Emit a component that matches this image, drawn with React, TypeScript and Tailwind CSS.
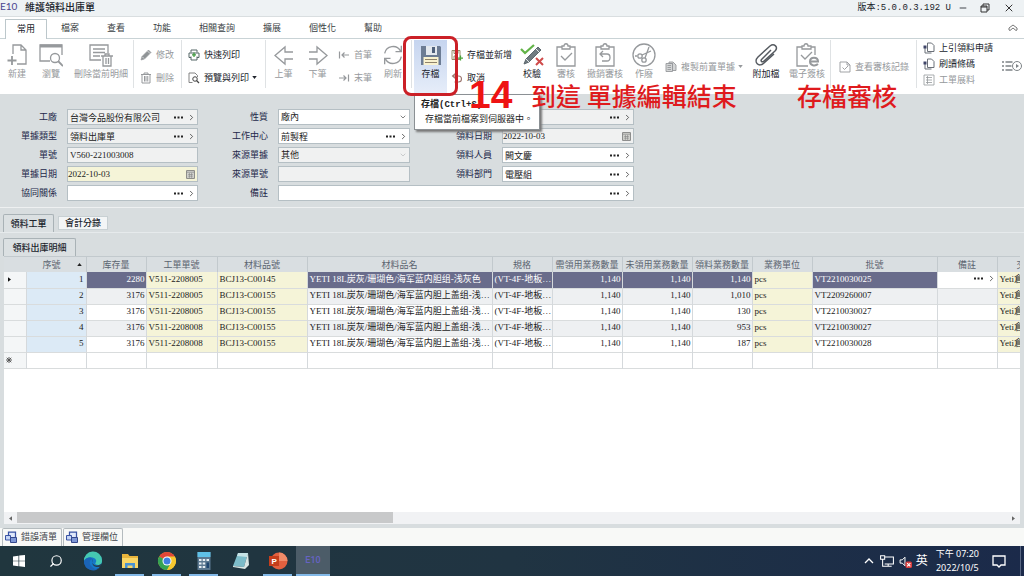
import { clsx } from "clsx";
import { ChevronDown, ChevronRight, Minus, Search, X } from "lucide-react";
import type { ReactNode } from "react";

const ui = "font-['Liberation_Sans','Noto_Sans_CJK_TC',sans-serif]";
const serif = "font-['Liberation_Serif','Noto_Sans_CJK_TC',serif]";

type IconProps = { children: ReactNode; className?: string; box?: string };

function Svg({ children, className = "h-6 w-6", box = "0 0 24 24" }: IconProps) {
  return (
    <svg viewBox={box} className={clsx("shrink-0", className)} fill="none" stroke="currentColor" strokeWidth="1.3" aria-hidden="true">
      {children}
    </svg>
  );
}

const NewIcon = () => (
  <Svg>
    <path d="M8 11V2h8l5 5v14h-9M16 2v5h5" />
    <path d="M7 13v9M2.500 17.500h9" strokeWidth="1.800" />
  </Svg>
);

const BrowseIcon = () => (
  <Svg>
    <path d="M11 18H1V2h22v10" />
    <path d="M1 3h22" strokeWidth="3" />
    <circle cx="16" cy="15" r="4.500" />
    <path d="m19 18 5 5" strokeWidth="1.800" />
  </Svg>
);

const DeleteRowIcon = () => (
  <Svg>
    <path d="M12 17H1V2h18v8M4 6h12M4 9.500h12M4 13h7" />
    <path d="M12 13h12M16 12.500V11h4v1.500M14 13.500V23h8v-9.500M17 15v6M19.500 15v6" />
  </Svg>
);

const PencilIcon = () => (
  <Svg className="h-3 w-3">
    <path d="m2 22 2-7L17 2l5 5L9 20z" fill="#8f9396" />
    <path d="m5 16 3 3M15 4l5 5" stroke="#fff" />
  </Svg>
);

const TrashIcon = () => (
  <Svg className="h-3 w-3">
    <path d="M2 5h20M8 4V2h8v2M4 5v17h16V5M9 8v11M12 8v11M15.500 8v11" strokeWidth="2" />
  </Svg>
);

const QuickPrintIcon = () => (
  <Svg className="h-3 w-3">
    <path d="M6 7V2h12v5M6 17H2V8h20v9h-4M6 15v7h12v-7" stroke="#566" strokeWidth="2" />
    <path d="M12 7v9M8 11.500h8" stroke="#3d9a3d" strokeWidth="2.500" />
  </Svg>
);

const PreviewIcon = () => (
  <Svg className="h-3 w-3">
    <path d="M9 21H2V2h12l5 5v3" stroke="#777" strokeWidth="1.800" />
    <circle cx="14" cy="14" r="4.500" stroke="#444" strokeWidth="2" />
    <path d="m17 17 5 5" stroke="#444" strokeWidth="2.500" />
  </Svg>
);

const ArrowIcon = ({ flip }: { flip?: boolean }) => (
  <Svg className={clsx("h-6 w-5", flip && "-scale-x-100")} box="0 0 20 24">
    <path d="M19 9h-8V4L1 12.500 11 21v-5h8" />
  </Svg>
);

const EdgeArrowIcon = ({ flip }: { flip?: boolean }) => (
  <Svg className={clsx("h-3 w-3", flip && "-scale-x-100")}>
    <path d="M3 5v14M22 12H8M13 7l-5 5 5 5" strokeWidth="2.400" />
  </Svg>
);

const RefreshIcon = () => (
  <Svg className="h-6 w-5">
    <path d="M2 10a10.300 10.300 0 0 1 19-3M22 14a10.300 10.300 0 0 1-19 3M22 1v7h-7M2 23v-7h7" strokeWidth="1.600" />
  </Svg>
);

const SaveIcon = () => (
  <Svg>
    <path d="M2 3h19l1 1v18H2z" fill="#6c7c94" stroke="none" />
    <path d="M7 3h11v9H7z" fill="#e4e9ef" stroke="none" />
    <path d="M13 4h3v6h-3z" fill="#50617c" stroke="none" />
    <path d="M4.500 14h15v8h-15z" fill="#f9f2cf" stroke="none" />
    <path d="M6 16.500h12M6 19.500h12" stroke="#8f836c" strokeWidth="1" />
  </Svg>
);

const SaveNewIcon = () => (
  <Svg className="h-3 w-3">
    <path d="M2 3h16v18H2zM6 3v6h8V3M6 21v-7h6" stroke="#8a8058" strokeWidth="1.800" />
    <path d="M19 13v10M14 18h10" stroke="#4ca43d" strokeWidth="2.500" />
  </Svg>
);

const CancelIcon = () => (
  <Svg className="h-3 w-3">
    <path d="M9 3 3 8l6 5M3 8h12a6 6 0 0 1 0 12H7" stroke="#9c7770" strokeWidth="2.200" />
  </Svg>
);

const VerifyIcon = () => (
  <Svg>
    <path d="m1 6 4 4 9-8" stroke="#62b347" strokeWidth="2.200" />
    <path d="m4 21 2-5L18 4l3 3L9 19z" fill="#6f7a80" stroke="#5d686e" strokeWidth="1" />
    <path d="m6 16 3 3M16 6l3 3" stroke="#e4e8e9" strokeWidth="1" />
    <path d="m16 15 7 7m0-7-7 7" stroke="#cf4a4a" strokeWidth="2" />
  </Svg>
);

const Clipboard = ({ children }: { children?: ReactNode }) => (
  <Svg>
    <path d="M8 4H3v19h18V4h-5M8 3h2c0-3 4-3 4 0h2v3H8z" />
    {children}
  </Svg>
);

const VoidIcon = () => (
  <Svg>
    <circle cx="12" cy="12" r="11" />
    <circle cx="8" cy="13" r="2.200" />
    <circle cx="12" cy="17" r="2.200" />
    <path d="m10 12 9-4M13 15l4-11M3 13h2" />
  </Svg>
);

const CopyIcon = () => (
  <Svg className="h-3 w-3">
    <path d="M2 5h13v16H2zM8 2h8l6 6v11h-7V5H8zM5 9h7M5 13h7M5 17h7" strokeWidth="1.800" fill="#d3d5d6" />
  </Svg>
);

const ClipIcon = () => (
  <Svg>
    <path d="M17 7 8 16c-2 2 0 4 2 2L21 8c4-4-1-8-5-5L4 14c-5 5 1 11 6 6L20 11" stroke="#555a60" strokeWidth="1.500" />
  </Svg>
);

const SignIcon = () => (
  <Svg>
    <path d="M7 4H2v19h11M16 4h4v8M7 3h2c0-3 4-3 4 0h3v3H7zM6 12l4 4 7-7" />
    <path d="M15 18.500h8c0-5-8-5-8 0 0 4 5 5 8 2.500" strokeWidth="2" />
  </Svg>
);

const LogIcon = () => (
  <Svg className="h-3 w-3">
    <path d="M2 2h14l6 6v14H2zM16 2v6h6M7 13l4 4 7-7" strokeWidth="1.800" />
  </Svg>
);

const PageLinkIcon = () => (
  <Svg className="h-3 w-3">
    <path d="M9 2h8l5 5v12H9zM4 12v10h13" stroke="#6b7078" strokeWidth="2" />
    <path d="M1 7h6v6H1z" fill="#3f4568" stroke="none" />
  </Svg>
);

const GridIcon = () => (
  <Svg className="h-3 w-3">
    <path d="M2 2h20v20H2zM6 7h12M6 12h12M6 17h12M9 4v16" strokeWidth="1.600" />
  </Svg>
);

const CalendarIcon = () => (
  <Svg className="mr-0.5 h-[9px] w-[9px]" box="0 0 16 16">
    <path d="M1 1h14v14H1z" fill="#d5d6d2" stroke="#777" strokeWidth="1.500" />
    <path d="M1 4h14M4 8h8M4 11h8M6 5v9M10 5v9" stroke="#888" strokeWidth="1.200" />
  </Svg>
);

const DotsIcon = () => (
  <svg viewBox="0 0 9 3" className="h-[3px] w-[9px]" aria-hidden="true">
    <path d="M0 .5h2v2H0zM3.500 .5h2v2h-2zM7 .5h2v2H7z" fill="#222" />
  </svg>
);

const WindowsStackIcon = () => (
  <Svg className="h-3 w-3">
    <path d="M7 2h14v11H7z" fill="#dfe8fa" stroke="#3953a4" strokeWidth="2.500" />
    <path d="M1 9h10v9H1z" fill="#c5d5f4" stroke="#3953a4" strokeWidth="2" />
    <path d="M11 13h12v10H11z" fill="#7e97d6" stroke="#34488d" strokeWidth="2" />
  </Svg>
);

type ToolProps = { label: string; icon: ReactNode; width: string; off?: boolean; active?: boolean };

function BigTool({ label, icon, width, off, active }: ToolProps) {
  return (
    <button
      type="button"
      className={clsx(
        "flex h-[53px] shrink-0 flex-col items-center gap-px pt-[3px] leading-3 whitespace-nowrap",
        width,
        off ? "text-[#96999c]" : "text-[#20242c]",
        active && "bg-linear-to-b from-[#c6d5ef] to-[#e6edf9]"
      )}
    >
      {icon}
      <span>{label}</span>
    </button>
  );
}

function SmallTool({ label, icon, off, menu, dense }: { label: string; icon: ReactNode; off?: boolean; menu?: boolean; dense?: boolean }) {
  return (
    <button
      type="button"
      className={clsx("flex items-center gap-1 whitespace-nowrap", dense ? "h-4" : "h-[23px]", off ? "text-[#96999c]" : "text-[#20242c]")}
    >
      {icon}
      <span>{label}</span>
      {menu ? (
        <svg viewBox="0 0 6 4" className="-ml-px h-[3px] w-[5px]" aria-hidden="true">
          <path d="M0 0h6L3 4z" fill="currentColor" />
        </svg>
      ) : null}
    </button>
  );
}

const Divider = () => <div className="h-12 w-px shrink-0 bg-[#dfe2e4]" />;

const note = "pointer-events-none absolute top-[39px] z-30 font-['Noto_Sans_CJK_TC',sans-serif] text-[25px] leading-[34px] font-medium whitespace-nowrap text-[#df1a1d]";

function Ribbon() {
  return (
    <div className="relative flex h-[55px] shrink-0 items-start overflow-visible bg-white pt-px text-[9px]">
      <BigTool label="新建" icon={<NewIcon />} width="ml-px w-8" off />
      <BigTool label="瀏覽" icon={<BrowseIcon />} width="w-9" off />
      <BigTool label="刪除當前明細" icon={<DeleteRowIcon />} width="w-16" off />
      <Divider />
      <div className="w-[47px] shrink-0 pt-[3px] pl-1.5">
        <SmallTool label="修改" icon={<PencilIcon />} off />
        <SmallTool label="刪除" icon={<TrashIcon />} off />
      </div>
      <Divider />
      <div className="w-[83px] shrink-0 pt-[3px] pl-1.5">
        <SmallTool label="快速列印" icon={<QuickPrintIcon />} />
        <SmallTool label="預覽與列印" icon={<PreviewIcon />} menu />
      </div>
      <Divider />
      <BigTool label="上筆" icon={<ArrowIcon />} width="w-[35px]" off />
      <BigTool label="下筆" icon={<ArrowIcon flip />} width="w-[33px]" off />
      <div className="w-[41px] shrink-0 pt-[3px] pl-1">
        <SmallTool label="首筆" icon={<EdgeArrowIcon />} off />
        <SmallTool label="末筆" icon={<EdgeArrowIcon flip />} off />
      </div>
      <BigTool label="刷新" icon={<RefreshIcon />} width="w-9" off />
      <Divider />
      <div className="relative ml-0.5 shrink-0">
        <BigTool label="存檔" icon={<SaveIcon />} width="w-[33px]" active />
        <div className="pointer-events-none absolute -inset-x-[11px] -top-1 -bottom-[3px] z-20 rounded-lg border-3 border-[#cb2027]" />
        <Tooltip />
      </div>
      <div className="w-[68px] shrink-0 pt-[3px] pl-1">
        <SmallTool label="存檔並新增" icon={<SaveNewIcon />} />
        <SmallTool label="取消" icon={<CancelIcon />} />
      </div>
      <BigTool label="校驗" icon={<VerifyIcon />} width="w-[34px]" />
      <BigTool label="審核" icon={<Clipboard><path d="m7 13 4 4 7-7" /></Clipboard>} width="w-[34px]" off />
      <BigTool label="撤銷審核" icon={<Clipboard><path d="m10 8-3 3 3 3M7 11h7c4 0 4 7 0 7H9" /></Clipboard>} width="w-11" off />
      <BigTool label="作廢" icon={<VoidIcon />} width="w-[34px]" off />
      <div className="w-[87px] shrink-0 pt-[15px] pl-1">
        <SmallTool label="複製前置單據" icon={<CopyIcon />} off menu />
      </div>
      <BigTool label="附加檔" icon={<ClipIcon />} width="w-9" />
      <BigTool label="電子簽核" icon={<SignIcon />} width="w-[46px]" off />
      <Divider />
      <div className="w-[85px] shrink-0 pt-[15px] pl-2">
        <SmallTool label="查看審核記錄" icon={<LogIcon />} off />
      </div>
      <Divider />
      <div className="shrink-0 pl-1.5">
        <SmallTool label="上引領料申請" icon={<PageLinkIcon />} dense />
        <SmallTool label="刷讀條碼" icon={<PageLinkIcon />} dense />
        <SmallTool label="工單展料" icon={<GridIcon />} dense off />
      </div>
      <button type="button" aria-label="更多" className="mt-5 mr-0.5 ml-auto text-[#7d8286]">
        <Svg className="h-3 w-5" box="0 0 20 12">
          <path d="M0 2h2M0 6h2M0 10h2M3.500 2h7M3.500 6h6M3.500 10h7" />
          <circle cx="15" cy="6" r="4.500" strokeWidth="1" />
          <path d="m14 4 3 2-3 2z" fill="currentColor" stroke="none" />
        </Svg>
      </button>

      <p className={clsx(note, "left-[531px]")}>到這 單據編輯結束</p>
      <p className={clsx(note, "left-[797px]")}>存檔審核</p>
      <p className="pointer-events-none absolute top-9 left-[469px] z-30 text-[39px] leading-10 font-bold text-[#ee1313]">14</p>
    </div>
  );
}

function Tooltip() {
  return (
    <div role="tooltip" className="absolute top-[54px] left-0 z-10 h-9 w-[126px] border border-[#8b9094] bg-white pt-1 pl-1.5 leading-3 whitespace-nowrap text-[#222] shadow-[2px_2px_2px_#777]">
      <p className="font-['Liberation_Mono','Noto_Sans_CJK_TC',monospace] font-bold">存檔(Ctrl+S)</p>
      <p className="mt-0.5 pl-1">存檔當前檔案到伺服器中。</p>
    </div>
  );
}

type FieldProps = {
  id: string;
  label: string;
  value?: string;
  kind?: "lookup" | "plain" | "date" | "select";
  tone?: "white" | "grey" | "yellow";
  wide?: boolean;
  hideLabel?: boolean;
};

const tones = { white: "bg-white", grey: "bg-[#f0f1f1]", yellow: "bg-[#f5f4d8]" };

function Field({ id, label, value = "", kind = "lookup", tone = "white", wide, hideLabel }: FieldProps) {
  return (
    <>
      <label htmlFor={id} className={clsx("text-right leading-4 whitespace-nowrap text-[#23284a]", hideLabel && "opacity-0")}>
        {label}
      </label>
      <div className={clsx("flex h-4 min-w-0 items-center border border-[#b5bfc4]", tones[tone], wide && "col-span-3")}>
        {kind === "select" ? (
          <select id={id} defaultValue={value} className={clsx("h-full min-w-0 flex-1 appearance-none pl-0.5 leading-3 text-[#222]", serif)}>
            <option>{value}</option>
          </select>
        ) : (
          <input id={id} defaultValue={value} className={clsx("h-full min-w-0 flex-1 leading-3 text-[#222] outline-none", kind === "date" ? "pl-0" : "pl-0.5", serif)} />
        )}
        {kind === "lookup" ? <LookupButtons /> : null}
        {kind === "date" ? <CalendarIcon /> : null}
        {kind === "select" ? <ChevronDown className={clsx("mr-0.5 h-2 w-2", tone === "grey" ? "text-[#b5b8ba]" : "text-[#444]")} /> : null}
      </div>
    </>
  );
}

function LookupButtons() {
  return (
    <span className="flex shrink-0 items-center gap-1 pr-px">
      <button type="button" aria-label="開窗">
        <DotsIcon />
      </button>
      <button type="button" aria-label="前往">
        <ChevronRight className="h-[9px] w-[9px] text-[#333]" />
      </button>
    </span>
  );
}

function HeaderForm() {
  return (
    <form className="grid shrink-0 grid-cols-[57px_131px_60px_132px_72px_132px] gap-x-2.5 gap-y-[3px] border-b border-[#eef0f1] pt-[15px] pb-1.5 text-[9px]">
      <Field id="plant" label="工廠" value="台灣今品股份有限公司" tone="grey" />
      <Field id="nature" label="性質" value="廠內" kind="select" />
      <Field id="issue-unit" label="領料單位" tone="grey" hideLabel />
      <Field id="doc-type" label="單據類型" value="領料出庫單" tone="grey" />
      <Field id="center" label="工作中心" value="前製程" />
      <Field id="issue-date" label="領料日期" value="2022-10-03" kind="date" tone="grey" />
      <Field id="doc-no" label="單號" value="V560-221003008" kind="plain" tone="grey" />
      <Field id="source" label="來源單據" value="其他" kind="select" tone="grey" />
      <Field id="person" label="領料人員" value="闕文慶" />
      <Field id="doc-date" label="單據日期" value="2022-10-03" kind="date" tone="yellow" />
      <Field id="source-no" label="來源單號" kind="plain" tone="grey" />
      <Field id="dept" label="領料部門" value="電壓組" />
      <Field id="relation" label="協同關係" />
      <Field id="remark" label="備註" wide />
    </form>
  );
}

type Column = { title: string; width: string; yellow?: boolean; right?: boolean };

const columns: Column[] = [
  { title: "库存量", width: "w-[60px]", right: true },
  { title: "工單單號", width: "w-[71px]", yellow: true },
  { title: "材料品號", width: "w-[90px]", yellow: true },
  { title: "材料品名", width: "w-[185px]" },
  { title: "規格", width: "w-[60px]" },
  { title: "需領用業務數量", width: "w-[70px]", right: true },
  { title: "未領用業務數量", width: "w-[70px]", right: true },
  { title: "領料業務數量", width: "w-[60px]", right: true },
  { title: "業務單位", width: "w-[60px]", yellow: true },
  { title: "批號", width: "w-[125px]" },
  { title: "備註", width: "w-[60px]" },
  { title: "交", width: "w-[48px]", yellow: true }
];

const cover = "YETI 18L炭灰/珊瑚色/海军蓝内胆上盖组-浅…";
const spec = "(VT-4F-地板…";

const rows = [
  ["2280", "V511-2208005", "BCJ13-C00145", "YETI 18L炭灰/珊瑚色/海军蓝内胆组-浅灰色", spec, "1,140", "1,140", "1,140", "pcs", "VT2210030025", "", "Yeti倉"],
  ["3176", "V511-2208005", "BCJ13-C00155", cover, spec, "1,140", "1,140", "1,010", "pcs", "VT2209260007", "", "Yeti倉"],
  ["3176", "V511-2208005", "BCJ13-C00155", cover, spec, "1,140", "1,140", "130", "pcs", "VT2210030027", "", "Yeti倉"],
  ["3176", "V511-2208008", "BCJ13-C00155", cover, spec, "1,140", "1,140", "953", "pcs", "VT2210030027", "", "Yeti倉"],
  ["3176", "V511-2208008", "BCJ13-C00155", cover, spec, "1,140", "1,140", "187", "pcs", "VT2210030028", "", "Yeti倉"]
];

function DetailTable() {
  return (
    <table className={clsx("w-[1041px] table-fixed border-collapse text-[9px] leading-3 text-[#222]", serif)}>
      <thead>
        <tr className={clsx("h-[15px] bg-[#d9dee1] text-[#5b6470]", ui)}>
          <th className="w-[22px] p-0" aria-label="選取" />
          <th className="w-[60px] border-r border-[#c2c9cd] p-0 font-normal">
            <span className="flex items-center justify-end gap-4 pr-1">
              序號
              <svg viewBox="0 0 6 4" className="h-[3px] w-[5px]" aria-hidden="true">
                <path d="M0 4h6L3 0z" fill="#222" />
              </svg>
            </span>
          </th>
          {columns.map((col) => (
            <th key={col.title} className={clsx("overflow-hidden border-r border-[#c2c9cd] p-0 font-normal whitespace-nowrap", col.width)}>
              {col.title}
            </th>
          ))}
        </tr>
      </thead>
      <tbody>
        {rows.map((row, r) => (
          <tr key={r} className={clsx("h-4 border-b border-[#d9dcdd]", r % 2 ? "bg-[#eef0f2]" : "bg-white")}>
            <td className="border-r border-[#d5d9dc] bg-[#f4f6f7] p-0">
              {r === 0 ? (
                <svg viewBox="0 0 4 6" className="ml-1 h-[5px] w-[3px]" aria-hidden="true">
                  <path d="M0 0v6l4-3z" fill="#111" />
                </svg>
              ) : null}
            </td>
            <td className="border-r border-[#d5d9dc] bg-[#dceaf6] p-0 pr-0.5 pb-0.5 text-right">{r + 1}</td>
            {row.map((cell, c) => {
              const col = columns[c];
              const selected = r === 0 && !col.yellow && c !== 10;
              return (
                <td
                  key={c}
                  className={clsx(
                    "overflow-hidden border-r border-[#d5d9dc] p-0 pb-0.5 whitespace-nowrap",
                    col.right ? "pr-px text-right" : "pl-0.5",
                    col.yellow && "bg-[#f5f4d8]",
                    selected && "bg-[#696c8b] text-white"
                  )}
                >
                  {r === 0 && c === 10 ? (
                    <span className="flex justify-end">
                      <LookupButtons />
                    </span>
                  ) : (
                    cell
                  )}
                </td>
              );
            })}
          </tr>
        ))}
        <tr className="h-4 border-b border-[#d9dcdd]">
          <td className="border-r border-[#d5d9dc] bg-[#f4f6f7] p-0 pl-0.5">
            <Svg className="h-1.5 w-1.5" box="0 0 8 8">
              <path d="M4 0v8M0 4h8M1 1l6 6M7 1 1 7" stroke="#555" />
            </Svg>
          </td>
          {Array.from({ length: 13 }, (_, i) => (
            <td key={i} className="border-r border-[#d5d9dc] p-0" />
          ))}
        </tr>
      </tbody>
    </table>
  );
}

const menus = ["檔案", "查看", "功能", "相關查詢", "擴展", "個性化", "幫助"];

function TaskIcon({ children }: { children: ReactNode }) {
  return (
    <svg viewBox="0 0 20 20" className="h-5 w-5" aria-hidden="true">
      {children}
    </svg>
  );
}

const taskApps: { name: string; open?: boolean; icon: ReactNode }[] = [
  {
    name: "開始",
    icon: <TaskIcon><path d="M4 5.500 9.500 4.700v5H4zM10.200 4.600 16 4v5.700h-5.800zM4 10.300h5.500v5L4 14.600zM10.200 10.300H16V16l-5.800-.7z" fill="#fff" /></TaskIcon>
  },
  { name: "搜尋", icon: <Search className="h-[14px] w-[14px] -scale-x-100 text-white" strokeWidth={2} /> },
  {
    name: "Edge",
    icon: (
      <TaskIcon>
        <circle cx="10" cy="10" r="9" fill="#1677c9" />
        <path d="M1 10a9 9 0 0 1 18-1c.6 4-3 6-6 4.500-2-1 1-2 0-4.500C11.500 5.500 4 5 1 10z" fill="#45c8b1" />
        <path d="M1 10c2-4 7-4.500 8.500-2-4 1-4 7 2 9.500 2 .6 4 0 5.500-1.500A9 9 0 0 1 1 10z" fill="#1b64b7" />
        <path d="M10 8c-2 2-1 6 3.500 6.500 2 .2 4-1 5-2l-1 3C13 17.500 7 14.500 10 8z" fill="#263c4c" />
      </TaskIcon>
    )
  },
  {
    name: "檔案總管",
    open: true,
    icon: (
      <TaskIcon>
        <path d="M2 3h6l1.500 2H18v12H2z" fill="#e9b53c" />
        <path d="M2 7h16v10H2z" fill="#fad766" />
        <path d="M5 17v-5h10v5h-2.500v-2.500h-5V17z" fill="#4b94d3" />
      </TaskIcon>
    )
  },
  {
    name: "Chrome",
    open: true,
    icon: (
      <TaskIcon>
        <circle cx="10" cy="10" r="9" fill="#f6c72f" />
        <path d="M10 10 2.200 5.500A9 9 0 0 1 17.800 5.500z" fill="#e04638" />
        <path d="M10 10 2.200 5.500A9 9 0 0 0 10 19l4-7z" fill="#35a353" />
        <path d="M10 5.500h7.800A9 9 0 0 1 10 19l4-7z" fill="#f6c72f" />
        <circle cx="10" cy="10" r="4.500" fill="#fff" />
        <circle cx="10" cy="10" r="3.500" fill="#3f7fe0" />
      </TaskIcon>
    )
  },
  {
    name: "小算盤",
    open: true,
    icon: (
      <TaskIcon>
        <path d="M3.500 1h13v18h-13z" fill="#5b7890" />
        <path d="M3.500 1h13v5h-13z" fill="#5fc0e6" />
        <path d="M5 8h2.500v2H5zM8.700 8h2.500v2H8.700zM12.500 8H15v2h-2.500zM5 11.500h2.500v2H5zM8.700 11.500h2.500v2H8.700zM5 15h2.500v2H5zM8.700 15h2.500v2H8.700z" fill="#e7eef3" />
        <path d="M12.500 11.500H15V17h-2.500z" fill="#20466f" />
      </TaskIcon>
    )
  },
  {
    name: "記事本",
    icon: (
      <TaskIcon>
        <path d="M7 2h10l-4 14-11-1z" fill="#7dbcc9" />
        <path d="M7 2h10l-1 4-10-1z" fill="#c6e3e6" />
        <path d="m2 15 11 1 4-14 1 12-4 4-12-2z" fill="#dbe7e5" />
      </TaskIcon>
    )
  },
  {
    name: "PowerPoint",
    open: true,
    icon: (
      <TaskIcon>
        <circle cx="11" cy="10" r="8.500" fill="#e2603f" />
        <path d="M11 1.500a8.500 8.500 0 0 1 8.500 8.500H11z" fill="#f08a68" />
        <path d="M1 5h10v10H1z" fill="#c43e1c" />
        <text x="3.500" y="13" fontSize="8" fontWeight="bold" fill="#fff" fontFamily="Liberation Sans">P</text>
      </TaskIcon>
    )
  }
];

function Taskbar() {
  return (
    <footer className="flex h-[30px] shrink-0 items-stretch bg-linear-to-r from-[#20363e] via-[#203442] to-[#1b2a4a] text-white">
      {taskApps.map((app) => (
        <button key={app.name} type="button" aria-label={app.name} className="relative flex w-[37px] shrink-0 items-center justify-center">
          {app.icon}
          {app.open ? <span className="absolute inset-x-1 bottom-0 h-0.5 bg-[#83b9e8]" /> : null}
        </button>
      ))}
      <button type="button" className="w-[34px] shrink-0 border-b-2 border-[#83b9e8] bg-[#4c5c68] font-[Roboto,sans-serif] text-[9px] font-medium text-[#6663c4]">
        E10
      </button>
      <div className="ml-auto flex items-center">
        <Svg className="h-[10px] w-[10px]" box="0 0 10 10">
          <path d="m1 7 4-4 4 4" />
        </Svg>
        <Svg className="ml-[6px] h-[14px] w-[14px]">
          <path d="M8 5h15v12H8M14 17v4M9 21h11M1 3h7v6H1zM4.500 9v12H9" strokeWidth="1.800" />
        </Svg>
        <Svg className="ml-[5px] h-[13px] w-[13px]">
          <path d="M2 9h4l5-5v16l-5-5H2z" strokeWidth="1.800" />
          <rect x="12" y="12" width="12" height="12" rx="3" fill="#d93c3c" stroke="none" />
          <path d="m15 15 6 6m0-6-6 6" strokeWidth="2" />
        </Svg>
        <span className="ml-1 text-[12px] leading-4">英</span>
        <div className="ml-2 text-center font-['Noto_Sans','Noto_Sans_CJK_TC',sans-serif] text-[9px] leading-[14px] whitespace-nowrap">
          <p>下午 07:20</p>
          <p>2022/10/5</p>
        </div>
        <Svg className="ml-[13px] h-[14px] w-[14px]" box="0 0 14 14">
          <path d="M1 2h12v9H9l-2 2-2-2H1z" />
        </Svg>
        <div className="mr-[3px] ml-[14px] h-[30px] w-px bg-[#5a6884]" />
      </div>
    </footer>
  );
}

export default function App() {
  return (
    <div className={clsx("flex h-screen flex-col overflow-hidden bg-[#d8dddf] text-[9px] leading-3 text-[#20242c]", ui)}>
      <header className="flex h-[17px] shrink-0 items-center border-b border-[#d9dee0] bg-[#eef2f4]">
        <span className="w-4 pb-1 font-[Lato,sans-serif] text-[10px] leading-3 text-[#4a4590]">E10</span>
        <h1 className="ml-[9px] text-[10px] leading-4 font-medium">維護領料出庫單</h1>
        <span className="ml-auto font-['Liberation_Mono','Noto_Sans_CJK_TC',monospace]">版本:5.0.0.3.192 U</span>
        <button type="button" aria-label="最小化" className="ml-[7px]">
          <Minus className="h-2.5 w-2.5" />
        </button>
        <button type="button" aria-label="還原" className="ml-3">
          <Svg className="h-2.5 w-2.5" box="0 0 10 10">
            <path d="M1 3h6v6H1zM3 3V1h6v6H7M1 4h6" stroke="#333" strokeWidth="1" />
          </Svg>
        </button>
        <button type="button" aria-label="關閉" className="mr-[9px] ml-[13px]">
          <X className="h-3 w-3 text-[#333]" strokeWidth={2} />
        </button>
      </header>

      <nav className="flex h-[22px] shrink-0 items-end border-b border-[#c9d3d6] bg-white">
        <button type="button" className="-mb-px ml-[5px] h-5 border border-b-0 border-[#bcc7cb] bg-white px-[11px] pb-0.5">
          常用
        </button>
        {menus.map((name) => (
          <button key={name} type="button" className="h-5 px-3.5 text-[#3a3f45]">
            {name}
          </button>
        ))}
        <button type="button" aria-label="收合" className="mr-1.5 mb-1.5 ml-auto">
          <Svg className="h-2 w-[10px]" box="0 0 10 8">
            <path d="m1 4 4-3 4 3M1 4v2l1 .5 3-2.500 3 2.500 1-.5V4" stroke="#777" strokeWidth="1" />
          </Svg>
        </button>
      </nav>

      <Ribbon />
      <HeaderForm />

      <div className="flex shrink-0 items-end gap-1 border-b border-[#e6eaec] px-[3px] pt-1.5">
        <button type="button" className="h-[18px] w-[51px] rounded-t-xs border border-b-0 border-[#a9b2b6] bg-[#dbe0e2] font-medium">
          領料工單
        </button>
        <button type="button" className="mb-0.5 h-[14px] w-[50px] border border-[#c8d0d3] bg-[#f3f5f6] font-medium">
          會計分錄
        </button>
      </div>
      <div className="flex shrink-0 px-[3px] pt-[5px]">
        <button type="button" className="h-[18px] w-[73px] rounded-t-xs border border-b-0 border-[#a9b2b6] bg-[#dbe0e2] font-medium">
          領料出庫明細
        </button>
      </div>

      <main className="mx-1 min-h-0 flex-1 overflow-hidden border-t border-[#c2c9cd] bg-white">
        <DetailTable />
      </main>
      <div className="mx-1 flex h-3 shrink-0 items-stretch bg-[#f1f2f4]">
        <button type="button" aria-label="向左" className="flex w-[13px] items-center justify-center">
          <svg viewBox="0 0 4 6" className="h-[5px] w-[3px]"><path d="M4 0v6L0 3z" fill="#666" /></svg>
        </button>
        <div className="flex-1">
          <div className="h-[11px] w-[38%] bg-[#c8c9ca]" />
        </div>
        <button type="button" aria-label="向右" className="flex w-[13px] items-center justify-center">
          <svg viewBox="0 0 4 6" className="h-[5px] w-[3px]"><path d="M0 0v6l4-3z" fill="#666" /></svg>
        </button>
      </div>

      <div className="mt-1 flex h-[18px] shrink-0 items-stretch gap-px bg-[#f8f9f7] px-0.5">
        {["錯誤清單", "管理欄位"].map((name) => (
          <button key={name} type="button" className="flex w-[60px] items-center gap-1 rounded-t-xs border border-b-0 border-[#b4bbbe] pb-0.5 pl-0.5 whitespace-nowrap text-[#3f444a]">
            <WindowsStackIcon />
            {name}
          </button>
        ))}
      </div>
      <Taskbar />
    </div>
  );
}
